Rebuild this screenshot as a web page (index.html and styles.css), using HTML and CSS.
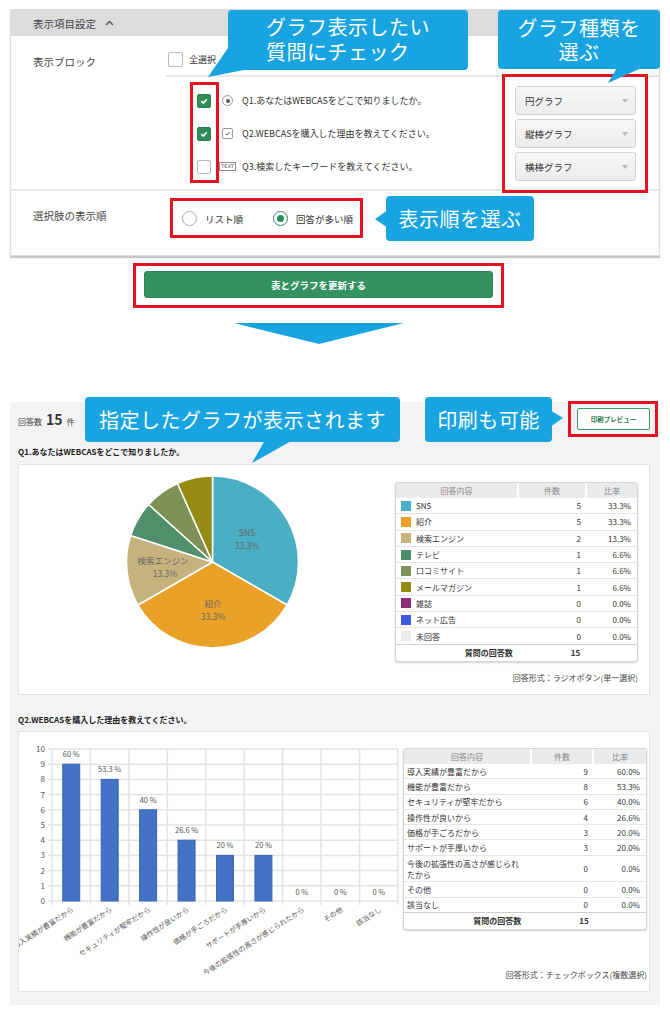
FILE: index.html
```html
<!DOCTYPE html>
<html lang="ja">
<head>
<meta charset="utf-8">
<title>表示項目設定</title>
<link rel="stylesheet" href="styles.css">
</head>
<body>
<div class="page">

  <section class="settings">
    <div class="settings-head">
      <span>表示項目設定</span>
      <svg class="chev" width="9" height="6" viewBox="0 0 9 6"><polyline points="1,5 4.5,1.5 8,5" fill="none" stroke="#555" stroke-width="1.4"/></svg>
    </div>

    <div class="block block-q">
      <div class="block-label">表示ブロック</div>
      <div class="block-body">
        <div class="all-row"><span class="cb cb-lg"></span><span>全選択</span></div>
        <div class="q-list">
          <div class="q-row">
            <span class="cb on"><svg width="10" height="10" viewBox="0 0 10 10"><polyline points="2.3,5.2 4.3,7.1 7.8,3.2" fill="none" stroke="#fff" stroke-width="1.7"/></svg></span>
            <span class="qicon"><span class="ic-radio"></span></span>
            <span class="qtext">Q1.あなたはWEBCASをどこで知りましたか。</span>
            <span class="sel">円グラフ<i class="caret"></i></span>
          </div>
          <div class="q-row">
            <span class="cb on"><svg width="10" height="10" viewBox="0 0 10 10"><polyline points="2.3,5.2 4.3,7.1 7.8,3.2" fill="none" stroke="#fff" stroke-width="1.7"/></svg></span>
            <span class="qicon"><span class="ic-check"><svg width="7" height="7" viewBox="0 0 7 7"><polyline points="1.5,3.6 3,5 5.6,2" fill="none" stroke="#666" stroke-width="1"/></svg></span></span>
            <span class="qtext">Q2.WEBCASを購入した理由を教えてください。</span>
            <span class="sel">縦棒グラフ<i class="caret"></i></span>
          </div>
          <div class="q-row">
            <span class="cb"></span>
            <span class="qicon"><span class="ic-text">TEXT</span></span>
            <span class="qtext">Q3.検索したキーワードを教えてください。</span>
            <span class="sel">横棒グラフ<i class="caret"></i></span>
          </div>
        </div>
      </div>
    </div>

    <div class="block block-order">
      <div class="block-label">選択肢の表示順</div>
      <div class="radios">
        <span class="rd"></span><span class="rd-text">リスト順</span>
        <span class="rd on"></span><span class="rd-text">回答が多い順</span>
      </div>
    </div>
  </section>

  <div class="update-box"><button class="update">表とグラフを更新する</button></div>
  <div class="down-arrow"></div>

  <section class="results">
    <div class="res-head">
      <div class="count"><span class="c-lbl">回答数</span><b class="c-num">15</b><span class="c-lbl">件</span></div>
      <button class="print">印刷プレビュー</button>
    </div>

    <h2 class="q-title">Q1.あなたはWEBCASをどこで知りましたか。</h2>
    <div class="q-box q-box1">
      <svg class="pie" width="376" height="229" viewBox="0 0 376 229">
        <g stroke="#fff" stroke-width="1.5">
          <path fill="#4aafc5" d="M193.5,97 L193.5,11 A86,86 0 0,1 267.98,140 Z"/>
          <path fill="#e9a128" d="M193.5,97 L267.98,140 A86,86 0 0,1 119.02,140 Z"/>
          <path fill="#c6b27d" d="M193.5,97 L119.02,140 A86,86 0 0,1 111.71,70.43 Z"/>
          <path fill="#4f8f6c" d="M193.5,97 L111.71,70.43 A86,86 0 0,1 129.59,39.45 Z"/>
          <path fill="#7e9256" d="M193.5,97 L129.59,39.45 A86,86 0 0,1 158.52,18.44 Z"/>
          <path fill="#948a14" d="M193.5,97 L158.52,18.44 A86,86 0 0,1 193.5,11 Z"/>
        </g>
        <g class="pie-lbl" text-anchor="middle">
          <text x="228" y="71">SNS</text>
          <text x="228" y="84">33.3%</text>
          <text x="194" y="142">紹介</text>
          <text x="194" y="155">33.3%</text>
          <text x="144" y="99">検索エンジン</text>
          <text x="146" y="112">13.3%</text>
        </g>
      </svg>
      <div class="side side1">
        <div class="tbl t1">
          <div class="tr th"><span>回答内容</span><span>件数</span><span>比率</span></div>
          <div class="tr"><span class="nm"><i class="sw c1"></i>SNS</span><span class="num">5</span><span class="pct">33.3%</span></div>
          <div class="tr"><span class="nm"><i class="sw c2"></i>紹介</span><span class="num">5</span><span class="pct">33.3%</span></div>
          <div class="tr"><span class="nm"><i class="sw c3"></i>検索エンジン</span><span class="num">2</span><span class="pct">13.3%</span></div>
          <div class="tr"><span class="nm"><i class="sw c4"></i>テレビ</span><span class="num">1</span><span class="pct">6.6%</span></div>
          <div class="tr"><span class="nm"><i class="sw c5"></i>口コミサイト</span><span class="num">1</span><span class="pct">6.6%</span></div>
          <div class="tr"><span class="nm"><i class="sw c6"></i>メールマガジン</span><span class="num">1</span><span class="pct">6.6%</span></div>
          <div class="tr"><span class="nm"><i class="sw c7"></i>雑誌</span><span class="num">0</span><span class="pct">0.0%</span></div>
          <div class="tr"><span class="nm"><i class="sw c8"></i>ネット広告</span><span class="num">0</span><span class="pct">0.0%</span></div>
          <div class="tr last"><span class="nm"><i class="sw c9"></i>未回答</span><span class="num">0</span><span class="pct">0.0%</span></div>
          <div class="tot"><span>質問の回答数</span><span>15</span></div>
        </div>
        <p class="qform">回答形式：ラジオボタン(単一選択)</p>
      </div>
    </div>

    <h2 class="q-title q-title2">Q2.WEBCASを購入した理由を教えてください。</h2>
    <div class="q-box q-box2">
      <svg class="bars" width="384" height="259" viewBox="0 0 384 259">
        <g stroke="#e3e3e3" stroke-width="1.5">
          <line x1="29" x2="379" y1="17" y2="17"/>
          <line x1="29" x2="379" y1="32.2" y2="32.2"/>
          <line x1="29" x2="379" y1="47.4" y2="47.4"/>
          <line x1="29" x2="379" y1="62.6" y2="62.6"/>
          <line x1="29" x2="379" y1="77.8" y2="77.8"/>
          <line x1="29" x2="379" y1="93" y2="93"/>
          <line x1="29" x2="379" y1="108.2" y2="108.2"/>
          <line x1="29" x2="379" y1="123.4" y2="123.4"/>
          <line x1="29" x2="379" y1="138.6" y2="138.6"/>
          <line x1="29" x2="379" y1="153.8" y2="153.8"/>
          <line x1="29" x2="379" y1="169" y2="169"/>
          <line x1="33" x2="33" y1="17" y2="173"/>
          <line x1="71.44" x2="71.44" y1="17" y2="173"/>
          <line x1="109.89" x2="109.89" y1="17" y2="173"/>
          <line x1="148.33" x2="148.33" y1="17" y2="173"/>
          <line x1="186.78" x2="186.78" y1="17" y2="173"/>
          <line x1="225.22" x2="225.22" y1="17" y2="173"/>
          <line x1="263.67" x2="263.67" y1="17" y2="173"/>
          <line x1="302.11" x2="302.11" y1="17" y2="173"/>
          <line x1="340.56" x2="340.56" y1="17" y2="173"/>
          <line x1="379" x2="379" y1="17" y2="173"/>
        </g>
        <g fill="#4472c4" stroke="#3a66b6" stroke-width="1">
          <rect x="43.72" y="32.2" width="17" height="136.8"/>
          <rect x="82.17" y="47.4" width="17" height="121.6"/>
          <rect x="120.61" y="77.8" width="17" height="91.2"/>
          <rect x="159.06" y="108.2" width="17" height="60.8"/>
          <rect x="197.5" y="123.4" width="17" height="45.6"/>
          <rect x="235.94" y="123.4" width="17" height="45.6"/>
        </g>
        <g class="ax" text-anchor="end">
          <text x="26" y="20">10</text>
          <text x="26" y="35.2">9</text>
          <text x="26" y="50.4">8</text>
          <text x="26" y="65.6">7</text>
          <text x="26" y="80.8">6</text>
          <text x="26" y="96">5</text>
          <text x="26" y="111.2">4</text>
          <text x="26" y="126.4">3</text>
          <text x="26" y="141.6">2</text>
          <text x="26" y="156.8">1</text>
          <text x="26" y="172">0</text>
        </g>
        <g class="val" text-anchor="middle">
          <text x="52.22" y="25.2">60 %</text>
          <text x="90.67" y="40.4">53.3 %</text>
          <text x="129.11" y="70.8">40 %</text>
          <text x="167.56" y="101.2">26.6 %</text>
          <text x="206" y="116.4">20 %</text>
          <text x="244.44" y="116.4">20 %</text>
          <text x="282.89" y="163">0 %</text>
          <text x="321.33" y="163">0 %</text>
          <text x="359.78" y="163">0 %</text>
        </g>
        <g class="xl" text-anchor="end">
          <text transform="translate(55.2 179) rotate(-33)">導入実績が豊富だから</text>
          <text transform="translate(93.7 179) rotate(-33)">機能が豊富だから</text>
          <text transform="translate(132.1 179) rotate(-33)">セキュリティが堅牢だから</text>
          <text transform="translate(170.6 179) rotate(-33)">操作性が良いから</text>
          <text transform="translate(209 179) rotate(-33)">価格が手ごろだから</text>
          <text transform="translate(247.4 179) rotate(-33)">サポートが手厚いから</text>
          <text transform="translate(285.9 179) rotate(-33)">今後の拡張性の高さが感じられたから</text>
          <text transform="translate(324.3 179) rotate(-33)">その他</text>
          <text transform="translate(362.8 179) rotate(-33)">該当なし</text>
        </g>
      </svg>
      <div class="side side2">
        <div class="tbl t2">
          <div class="tr th"><span>回答内容</span><span>件数</span><span>比率</span></div>
          <div class="tr"><span class="nm">導入実績が豊富だから</span><span class="num">9</span><span class="pct">60.0%</span></div>
          <div class="tr"><span class="nm">機能が豊富だから</span><span class="num">8</span><span class="pct">53.3%</span></div>
          <div class="tr"><span class="nm">セキュリティが堅牢だから</span><span class="num">6</span><span class="pct">40.0%</span></div>
          <div class="tr"><span class="nm">操作性が良いから</span><span class="num">4</span><span class="pct">26.6%</span></div>
          <div class="tr"><span class="nm">価格が手ごろだから</span><span class="num">3</span><span class="pct">20.0%</span></div>
          <div class="tr"><span class="nm">サポートが手厚いから</span><span class="num">3</span><span class="pct">20.0%</span></div>
          <div class="tr tall"><span class="nm nm2">今後の拡張性の高さが感じられ<br>たから</span><span class="num">0</span><span class="pct">0.0%</span></div>
          <div class="tr"><span class="nm">その他</span><span class="num">0</span><span class="pct">0.0%</span></div>
          <div class="tr last"><span class="nm">該当なし</span><span class="num">0</span><span class="pct">0.0%</span></div>
          <div class="tot"><span>質問の回答数</span><span>15</span></div>
        </div>
        <p class="qform">回答形式：チェックボックス(複数選択)</p>
      </div>
    </div>
  </section>

  <!-- annotation overlays -->
  <div class="rb rb-cb"></div>
  <div class="rb rb-sel"></div>
  <div class="rb rb-rd"></div>
  <div class="rb rb-print"></div>

  <div class="co co1"><span class="co-line">グラフ表示したい</span><span class="co-line">質問にチェック</span></div>
  <div class="ptr p1"></div>
  <div class="co co2"><span class="co-line">グラフ種類を</span><span class="co-line">選ぶ</span></div>
  <div class="ptr p2"></div>
  <div class="co co-one co3">表示順を選ぶ</div>
  <div class="ptr p3"></div>
  <div class="co co-one co4">指定したグラフが表示されます</div>
  <div class="ptr p4"></div>
  <div class="co co-one co5">印刷も可能</div>
  <div class="ptr p5"></div>
</div>
</body>
</html>
```

FILE: styles.css
```css
* { box-sizing: border-box; }

body {
  margin: 0;
  background: #fff;
  font-family: "Noto Sans CJK JP", "Noto Sans", sans-serif;
  color: #333;
}

.page {
  position: relative;
  width: 670px;
  height: 1016px;
  padding-top: 9px;
  overflow: hidden;
}

/* ---------- settings panel ---------- */
.settings {
  margin: 0 10px;
  border: 1px solid #dedede;
  background: #fff;
  box-shadow: 0 2px 1px #c9c9c9;
}

.settings-head {
  height: 26px;
  background: #dcdcdc;
  display: flex;
  align-items: center;
  gap: 9px;
  padding-left: 22px;
  font-size: 10.5px;
  color: #444;
}

.block {
  display: grid;
  grid-template-columns: 155px 1fr;
  align-items: start;
}

.block-q { border-bottom: 2px solid #e6e6e6; }

.block-label {
  padding-left: 22px;
  font-size: 10.5px;
  line-height: 15px;
  color: #444;
}

.block-q .block-label { margin-top: 17.5px; }

.block-body { padding-top: 16px; }

.all-row {
  display: flex;
  align-items: center;
  height: 15px;
  margin-left: 2px;
  gap: 6px;
  font-size: 9px;
}

.cb {
  width: 14px;
  height: 14px;
  border: 1px solid #b8b8b8;
  border-radius: 2px;
  background: #fff;
  display: flex;
  align-items: center;
  justify-content: center;
  flex: none;
}
.cb-lg { width: 15px; height: 15px; }
.cb.on { background: #2f8d59; border-color: #2a7f50; }

.q-list {
  margin-top: 8px;
  border-top: 2px solid #e8e8e8;
  padding: 9px 23px 8px 31px;
  display: flex;
  flex-direction: column;
  gap: 4px;
}

.q-row {
  display: flex;
  align-items: center;
  height: 29px;
}

.qicon {
  width: 17px;
  margin-left: 8px;
  display: flex;
  justify-content: center;
  flex: none;
}

.ic-radio {
  width: 11px;
  height: 11px;
  border: 1px solid #9a9a9a;
  border-radius: 50%;
  display: flex;
  align-items: center;
  justify-content: center;
}
.ic-radio::after {
  content: "";
  width: 4px;
  height: 4px;
  border-radius: 50%;
  background: #555;
}

.ic-check {
  width: 11px;
  height: 11px;
  border: 1px solid #9a9a9a;
  border-radius: 2px;
  display: flex;
  align-items: center;
  justify-content: center;
}

.ic-text {
  font-family: "DejaVu Sans", sans-serif;
  font-size: 5px;
  line-height: 7px;
  border: 1px solid #888;
  padding: 0 1.5px;
  color: #555;
}

.qtext {
  margin-left: 6px;
  font-size: 9px;
  color: #333;
}

.sel {
  margin-left: auto;
  width: 121px;
  height: 29px;
  border: 1px solid #d3d3d3;
  border-radius: 3px;
  background: linear-gradient(#f7f7f7, #ececec);
  display: flex;
  align-items: center;
  justify-content: space-between;
  padding: 0 7px 0 9px;
  font-size: 9.5px;
  color: #333;
  flex: none;
}

.caret {
  width: 0;
  height: 0;
  border-left: 3.5px solid transparent;
  border-right: 3.5px solid transparent;
  border-top: 4px solid #bbb;
}

.block-order { height: 64px; }
.block-order .block-label { margin-top: 17px; }

.radios {
  display: flex;
  align-items: center;
  height: 15px;
  margin-top: 20px;
  padding-left: 16px;
}

.rd {
  width: 15px;
  height: 15px;
  border: 1px solid #aaa;
  border-radius: 50%;
  background: #fff;
  display: flex;
  align-items: center;
  justify-content: center;
  flex: none;
}
.rd.on { border: 1.5px solid #2f8d59; }
.rd.on::after {
  content: "";
  width: 7px;
  height: 7px;
  border-radius: 50%;
  background: #2f8d59;
}
.rd-text { margin-left: 8px; font-size: 9.5px; }
.rd-text + .rd { margin-left: 30px; }

/* ---------- update button ---------- */
.update-box {
  margin: 7px 0 0 133px;
  width: 371px;
  border: 3px solid #e5121f;
  padding: 5px 8px 7px;
}

.update {
  display: block;
  width: 100%;
  height: 27px;
  background: #33925f;
  border: 1px solid #2b8353;
  border-radius: 3px;
  color: #fff;
  font-family: inherit;
  font-weight: bold;
  font-size: 9.5px;
}

.down-arrow {
  margin: 15px 0 0 234px;
  width: 0;
  height: 0;
  border-left: 85px solid transparent;
  border-right: 85px solid transparent;
  border-top: 21px solid #18a4e0;
}

/* ---------- results ---------- */
.results {
  margin: 58px 10px 0;
  background: #f3f3f3;
  padding: 6px 10px 13px 8px;
}

.res-head {
  display: flex;
  align-items: center;
  justify-content: space-between;
  height: 22px;
}

.count { display: flex; align-items: baseline; gap: 4px; }
.c-lbl { font-size: 8px; color: #444; }
.c-num { font-size: 14px; font-weight: bold; color: #333; }

.print {
  width: 73px;
  height: 22px;
  border: 1px solid #3c9a66;
  border-radius: 2px;
  background: #fff;
  color: #2f7d4f;
  font-family: inherit;
  font-size: 6.5px;
  font-weight: bold;
  padding: 0;
}

.q-title {
  margin: 16px 0 6px;
  font-size: 8px;
  line-height: 12px;
  font-weight: bold;
  color: #222;
}
.q-title2 { margin: 19px 0 5px; }

.q-box {
  background: #fff;
  border: 1px solid #e3e3e3;
  display: flex;
}
.q-box1 { height: 231px; }
.q-box2 { height: 261px; }

.pie, .bars { flex: none; display: block; }

.pie-lbl text {
  font-family: "Noto Sans CJK JP", "Noto Sans", sans-serif;
  font-size: 8.5px;
  fill: #666;
}

.bars text {
  font-family: "Noto Sans CJK JP", "Noto Sans", sans-serif;
  fill: #555;
}
.bars .ax text { font-size: 8px; }
.bars .val text { font-size: 7.5px; }
.bars .xl text { font-size: 7px; }

.side {
  display: flex;
  flex-direction: column;
  padding-bottom: 10px;
}
.side1 { width: 243px; padding-top: 17px; }
.side2 { width: 244px; padding-top: 16px; }

.tbl {
  border: 1px solid #d6d6d6;
  border-radius: 3px;
  box-shadow: 0 1px 2px rgba(0, 0, 0, .18);
  font-size: 8px;
  background: #fff;
  overflow: hidden;
  color: #333;
}

.tr {
  display: grid;
  height: 16.3px;
  align-items: center;
  border-bottom: 1px solid #e6e6e6;
}
.t1 .tr { grid-template-columns: 121px 68px 1fr; }
.t2 .tr { grid-template-columns: 126px 62px 1fr; height: 15.3px; }
.t2 .tr.tall { height: 26.5px; }
.tr.last { border-bottom: 1px solid #d0d0d0; }

.tbl .th {
  height: 15px;
  background: #ebebeb;
  color: #888;
  border-bottom: none;
  align-items: stretch;
}
.th span {
  display: flex;
  align-items: center;
  justify-content: center;
}
.th span + span { border-left: 2px solid #fff; }

.nm { display: flex; align-items: center; padding-left: 5px; }
.t2 .nm { padding-left: 3px; display: block; }
.nm2 { line-height: 11px; white-space: nowrap; }

.sw { width: 10px; height: 10px; margin-right: 5px; flex: none; }
.c1 { background: #4aafc6; }
.c2 { background: #eba12a; }
.c3 { background: #c5b27c; }
.c4 { background: #4f8e6c; }
.c5 { background: #7f9257; }
.c6 { background: #958b13; }
.c7 { background: #8e2c78; }
.c8 { background: #3d5be0; }
.c9 { background: #ececec; }

.num { text-align: right; padding-right: 4px; }
.pct { text-align: right; padding-right: 6px; }

.tot {
  display: flex;
  justify-content: center;
  align-items: center;
  gap: 58px;
  height: 16px;
  padding-left: 12px;
  font-weight: bold;
}

.qform {
  margin: auto 0 0;
  text-align: right;
  font-size: 8px;
  line-height: 12px;
  color: #444;
}

/* ---------- annotation overlays ---------- */
.rb {
  position: absolute;
  border: 3px solid #e5121f;
  z-index: 1;
}
.rb-cb { left: 190px; top: 82px; width: 29px; height: 101px; }
.rb-sel { left: 502px; top: 74px; width: 146px; height: 119px; }
.rb-rd { left: 170px; top: 198px; width: 193px; height: 40px; }
.rb-print { left: 568px; top: 401px; width: 90px; height: 36px; }

.co {
  position: absolute;
  z-index: 2;
  background: #18a4e0;
  color: #fff;
  border-radius: 4px;
  font-size: 20px;
  line-height: 24px;
  letter-spacing: .5px;
}
.co-line {
  display: block;
  height: 24px;
  line-height: 24px;
}
.co1 { left: 228px; top: 10px; width: 240px; height: 60px; padding: 5px 0 0 38px; }
.co1 .co-line + .co-line { margin-top: 1px; }
.co2 { left: 498px; top: 10px; width: 162px; height: 59px; padding-top: 6px; text-align: center; }
.co-one {
  display: flex;
  align-items: center;
  justify-content: center;
  height: 45px;
}
.co3 { left: 386px; top: 196px; width: 148px; }
.co4 { left: 85px; top: 397px; width: 315px; }
.co5 { left: 425px; top: 397px; width: 127px; }

.ptr {
  position: absolute;
  z-index: 2;
  background: #18a4e0;
}
.p1 { left: 206px; top: 44px; width: 40px; height: 36px; clip-path: polygon(22px 4px, 2px 33px, 38px 26px); }
.p2 { left: 604px; top: 64px; width: 44px; height: 21px; clip-path: polygon(14px 2px, 42px 2px, 4px 19px); }
.p3 { left: 373px; top: 208px; width: 16px; height: 22px; clip-path: polygon(15px 2px, 15px 20px, 2px 11px); }
.p4 { left: 250px; top: 438px; width: 46px; height: 27px; clip-path: polygon(15px 2px, 43px 2px, 2px 25px); }
.p5 { left: 548px; top: 408px; width: 17px; height: 21px; clip-path: polygon(2px 2px, 2px 19px, 15px 10px); }
```
